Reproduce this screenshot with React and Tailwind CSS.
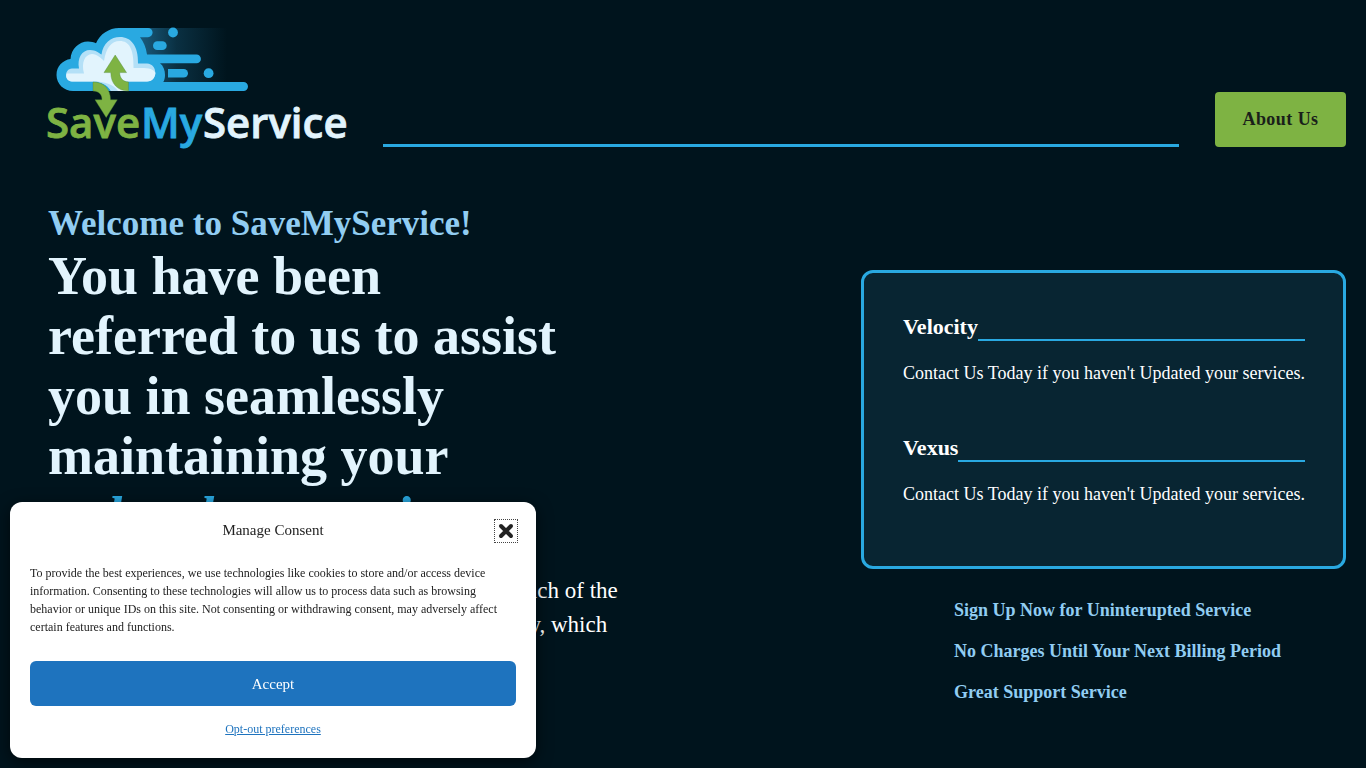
import React, { useState } from 'react';

const providers = [
  { name: 'Velocity', text: "Contact Us Today if you haven't Updated your services." },
  { name: 'Vexus', text: "Contact Us Today if you haven't Updated your services." },
];

const perks = [
  'Sign Up Now for Uninterupted Service',
  'No Charges Until Your Next Billing Period',
  'Great Support Service',
];

const Logo = () => (
  <svg viewBox="47 27 300 120" className="w-[300px] h-[120px] shrink-0 overflow-visible" role="img" aria-label="SaveMyService">
    <defs>
      <linearGradient id="trail" x1="0" x2="1" y1="0" y2="0">
        <stop offset="0" stopColor="#1b6286" />
        <stop offset="0.45" stopColor="#0a3042" />
        <stop offset="1" stopColor="#00141d" />
      </linearGradient>
    </defs>
    <rect x="135" y="28" width="92" height="58" fill="url(#trail)" />
    {/* cloud outline with the two long bars */}
    <path
      fill="#29a9e1"
      d="M73 91C64 91 56.500 84 56.500 75C56.500 66 63 60 70.500 59C71 49 79 41.500 88 41.500C91 41.500 94 42.300 96 43.300C100 34 109 28 119 28H148A4.600 4.600 0 0 1 148 37.200H140C143.500 41.500 146 47 147 54.500H196.500A4.400 4.400 0 0 1 196.500 63.300H160C163.500 66 165 70.500 165 75C165 77.600 164.500 80 163.300 82H243.500A4.500 4.500 0 0 1 243.500 91Z"
    />
    <circle cx="173" cy="32.500" r="4.900" fill="#29a9e1" />
    <rect x="153" y="41.300" width="13.700" height="8.800" rx="4.400" fill="#29a9e1" />
    <path d="M168 69H183.700A4.300 4.300 0 0 1 183.700 77.600H168Z" fill="#29a9e1" />
    <circle cx="208.600" cy="73.200" r="4.900" fill="#29a9e1" />
    {/* cloud body */}
    <path
      fill="#b4e0f7"
      d="M72 81.500C64 81 64 69 72 68.500H79C77 58 82 50 90 50C96 50 99 53 101.500 54.500C103 43 111 37 120 37C131 37 138.500 46 138 63.500H147C158 64 158 81 147 81.500Z"
    />
    <path
      fill="#e2f4fd"
      d="M72 81.500C67 81.500 65 76 67 73.500H84C81 62 85 54.500 92 54C97 54 101 58 104 61C106 48 111 41 120 41C129 41 134 49 133.500 68H144C151 68 155 71 155.500 73C155 78 152 81.500 147 81.500H119L129 91H111C108 84 101 81.500 93 81.500Z"
    />
    <path d="M93 81.500C101 82 107 84.500 111 91H118C113 84 105 81.500 93 81.500Z" fill="#b4e0f7" />
    <g fill="#7eb343" stroke="#4f8a3a" strokeWidth="0.400">
      <path d="M115.200 55L126.500 72.600H119.700C119.700 78 123 81.800 128.500 82V91C118 91 110.800 84 110.800 72.600H104Z" />
      <path d="M93 82C104 82 110.500 89 110.500 99.800H117.300L106.200 117.500L95 99.800H102C102 94.500 99 91 93 91Z" />
    </g>
    <g fontFamily="'Open Sans', 'Noto Sans', sans-serif" fontSize="42" fontWeight="600" strokeWidth="0.800">
      <text x="46" y="138" fill="#7eb343" stroke="#7eb343">Save</text>
      <text x="141" y="138" fill="#29a9e1" stroke="#29a9e1">My</text>
      <text x="203" y="138" fill="#e2f4fd" stroke="#e2f4fd">Service</text>
    </g>
  </svg>
);

const Header = () => (
  <header className="flex items-end gap-9 pt-[27px] pl-[47px] pr-5">
    <Logo />
    <div className="flex-1 h-[3px] bg-[#29a9e1]" />
    <button type="button" className="h-[55px] w-[131px] rounded bg-[#7eb343] text-[18px] font-bold tracking-wide text-[#1a1f1a]">
      About Us
    </button>
  </header>
);

const Provider = ({ name, text }) => (
  <section>
    <div className="flex items-end">
      <h2 className="text-[22px] leading-[28px] font-bold">{name}</h2>
      <div className="flex-1 h-[2px] bg-[#29a9e1]" />
    </div>
    <p className="mt-[18px] text-[18px] leading-[28px] whitespace-nowrap">{text}</p>
  </section>
);

const ConsentBanner = ({ onClose }) => (
  <div
    role="dialog"
    aria-labelledby="consent-title"
    className="fixed left-[10px] bottom-[10px] w-[526px] rounded-xl bg-white px-5 pt-4 pb-5 text-[#222] shadow-[0_4px_16px_rgba(0,0,0,0.6)]"
  >
    <div className="grid grid-cols-[1fr_auto_1fr] items-end">
      <h2 id="consent-title" className="col-start-2 pb-px text-[15px] leading-6">Manage Consent</h2>
      <button
        type="button"
        onClick={onClose}
        aria-label="Close dialog"
        className="-mr-[2px] flex size-6 items-center justify-center justify-self-end border border-dotted border-[#444]"
      >
        <svg viewBox="0 0 16 16" className="size-4" stroke="#222" strokeWidth="4" strokeLinecap="round">
          <path d="M3 3L13 13M13 3L3 13" />
        </svg>
      </button>
    </div>
    <p className="mt-[21px] text-[12px] leading-[18px]">
      To provide the best experiences, we use technologies like cookies to store and/or access device information.
      Consenting to these technologies will allow us to process data such as browsing behavior or unique IDs on this
      site. Not consenting or withdrawing consent, may adversely affect certain features and functions.
    </p>
    <button type="button" onClick={onClose} className="mt-[25px] h-[45px] w-full rounded-md bg-[#1e73be] pt-px text-[15px] text-white">
      Accept
    </button>
    <div className="mt-[14px] text-center text-[12px] leading-[18px]">
      <a href="#preferences" className="text-[#1e73be] underline">Opt-out preferences</a>
    </div>
  </div>
);

const App = () => {
  const [showConsent, setShowConsent] = useState(true);

  return (
    <div className="min-h-screen bg-[#00141d] font-['Liberation_Serif',serif] text-white">
      <Header />
      <main className="flex items-start justify-between gap-10 pt-[55px] pl-12 pr-5">
        <div className="max-w-[580px]">
          <h1 className="font-bold">
            <span className="block text-[35px] leading-[44px] text-[#91cdf2]">Welcome to SaveMyService!</span>
            <span className="block max-w-[520px] text-[54px] leading-[60px] text-[#e2f4fd]">
              You have been referred to us to assist you in seamlessly maintaining your{' '}
              <em className="block text-[#29a9e1]">web cohort service</em>
            </span>
          </h1>
          <p className="mt-7 text-[23px] leading-[34px]">
            SaveMyService is here to assist your customers of each of the
            providers listed on this site, Velocity and Vexus today, which
          </p>
        </div>
        <aside className="mt-[68px] w-[485px] shrink-0">
          <div className="flex flex-col gap-[47px] rounded-xl border-[3px] border-[#29a9e1] bg-[#082532] pt-10 pr-[38px] pb-[58px] pl-[39px]">
            {providers.map((provider) => (
              <Provider key={provider.name} {...provider} />
            ))}
          </div>
          <ul className="mt-[27px] flex flex-col gap-[13px] pl-[93px] text-[18px] leading-[28px] font-bold text-[#91cdf2]">
            {perks.map((perk) => (
              <li key={perk}>{perk}</li>
            ))}
          </ul>
        </aside>
      </main>
      {showConsent && <ConsentBanner onClose={() => setShowConsent(false)} />}
    </div>
  );
};

export default App;
